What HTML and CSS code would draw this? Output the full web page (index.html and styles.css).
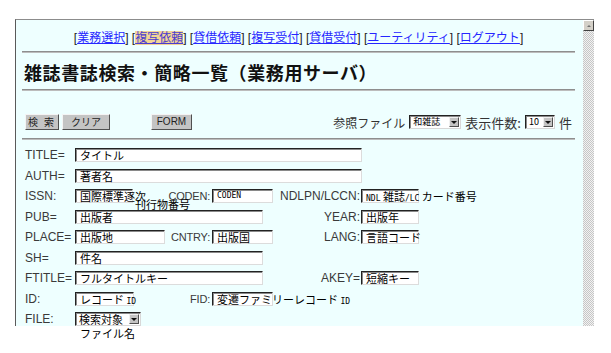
FILE: index.html
```html
<!DOCTYPE html>
<html lang="ja">
<head>
<meta charset="utf-8">
<title>雑誌書誌検索・簡略一覧</title>
<link rel="stylesheet" href="styles.css">
</head>
<body>
<div class="window">
  <div class="pane">
    <div class="nav">[<a href="#">業務選択</a>] [<a href="#" class="cur">複写依頼</a>] [<a href="#">貸借依頼</a>] [<a href="#">複写受付</a>] [<a href="#">貸借受付</a>] [<a href="#">ユーティリティ</a>] [<a href="#">ログアウト</a>]</div>
    <hr class="rule">
    <h1 class="title">雑誌書誌検索・簡略一覧（業務用サーバ）</h1>
    <hr class="rule r2">
    <div class="toolbar">
      <div class="btns">
        <span class="btn b1">検 索</span>
        <span class="btn b2">クリア</span>
        <span class="btn b3">FORM</span>
      </div>
      <div class="opts">
        <span>参照ファイル</span>
        <span class="sel s1"><span class="sv">和雑誌</span><span class="arr"></span></span>
        <span class="big">表示件数:</span>
        <span class="sel s2"><span class="sv">10</span><span class="arr"></span></span>
        <span class="big">件</span>
      </div>
    </div>
    <hr class="rule r3">
    <div class="grid">
      <span class="lab c1">TITLE=</span>
      <span class="cell wide"><span class="fld w287">タイトル</span></span>

      <span class="lab c1">AUTH=</span>
      <span class="cell wide"><span class="fld w287">著者名</span></span>

      <span class="lab c1">ISSN:</span>
      <span class="cell c2"><span class="fld w58">国際標準逐次</span><span class="wrapnote">刊行物番号</span></span>
      <span class="lab c3">CODEN:</span>
      <span class="cell c4"><span class="fld w61 mono">CODEN</span></span>
      <span class="lab c5">NDLPN/LCCN:</span>
      <span class="cell c6"><span class="fld w58"><span class="mono">NDL</span> 雑誌<span class="mono">/LC</span> カード番号</span></span>

      <span class="lab c1">PUB=</span>
      <span class="cell c24"><span class="fld w188">出版者</span></span>
      <span class="lab c5">YEAR:</span>
      <span class="cell c6"><span class="fld w58">出版年</span></span>

      <span class="lab c1">PLACE=</span>
      <span class="cell c2"><span class="fld w90">出版地</span></span>
      <span class="lab c3">CNTRY:</span>
      <span class="cell c4"><span class="fld w61">出版国</span></span>
      <span class="lab c5">LANG:</span>
      <span class="cell c6"><span class="fld w58">言語コード</span></span>

      <span class="lab c1">SH=</span>
      <span class="cell c24"><span class="fld w188">件名</span></span>

      <span class="lab c1">FTITLE=</span>
      <span class="cell c24"><span class="fld w188">フルタイトルキー</span></span>
      <span class="lab c5">AKEY=</span>
      <span class="cell c6"><span class="fld w58">短縮キー</span></span>

      <span class="lab c1">ID:</span>
      <span class="cell c2"><span class="fld w59">レコード <span class="mono">ID</span></span></span>
      <span class="lab c3">FID:</span>
      <span class="cell c4"><span class="fld w61">変遷ファミリーレコード <span class="mono">ID</span></span></span>

      <span class="lab c1">FILE:</span>
      <span class="cell c2"><span class="sel s3"><span class="sv">検索対象</span><span class="arr"></span></span></span>
    </div>
  </div>
  <div class="scroll"><span class="up"></span></div>
</div>
<div class="below">ファイル名</div>
</body>
</html>
```

FILE: styles.css
```css
* { box-sizing: border-box; }

body {
  margin: 0;
  background: #ffffff;
  font-family: "Liberation Sans", "Noto Sans CJK JP", sans-serif;
  color: #111;
}

.window {
  margin: 19px 0 0 15px;
  width: 579px;
  height: 307px;
  display: flex;
  border-top: 1px solid #8c8c8c;
  border-left: 1px solid #5a5a5a;
  overflow: hidden;
}

.pane {
  flex: 1;
  background: #eeffff;
  padding: 10px 8px 0 6px;
}

.scroll {
  width: 11px;
  display: flex;
  flex-direction: column;
  background: repeating-conic-gradient(#c6c6c6 0 25%, #f2f2f2 0 50%) 0 0 / 2px 2px;
}

.up {
  height: 11px;
  background: #d4d0c8;
  border: 1px solid;
  border-color: #ffffff #404040 #404040 #ffffff;
  display: flex;
  align-items: center;
  justify-content: center;
}

.up::before {
  content: "";
  border-left: 2px solid transparent;
  border-right: 2px solid transparent;
  border-bottom: 2px solid #707070;
}

.below {
  padding: 1px 0 0 80px;
  font-size: 11px;
  line-height: 13px;
  color: #000;
  font-family: "Noto Sans CJK JP", sans-serif;
}

.nav {
  text-align: center;
  font-size: 12px;
  line-height: 16px;
  color: #222;
}

.nav a {
  color: #2626ff;
  text-decoration: underline;
}

.nav a.cur {
  background: #f3d596;
  color: #4a3cd0;
}

.rule {
  border: 0;
  height: 2px;
  margin: 5px 0 0;
  border-top: 1px solid #8e8e8e;
  border-bottom: 1px solid #bcbcbc;
}

.title {
  margin: 7px 0 0 2px;
  font-size: 18px;
  line-height: 24px;
  font-weight: bold;
  letter-spacing: 0.6px;
  font-family: "Noto Sans CJK JP", sans-serif;
  color: #111;
}

.r2 { margin-top: 5px; }

.toolbar {
  margin-top: 23px;
  height: 16px;
  display: flex;
  align-items: center;
  justify-content: space-between;
  padding: 0 3px 0 3px;
}

.btns {
  display: flex;
  align-items: center;
}

.btn {
  height: 16px;
  background: #c4c4c4;
  border: 1px solid;
  border-color: #f4f4f4 #505050 #505050 #f4f4f4;
  font-size: 10px;
  line-height: 14px;
  text-align: center;
  color: #222;
  font-family: "Noto Sans CJK JP", sans-serif;
}

.b1 { width: 34px; letter-spacing: 2px; }
.b2 { width: 48px; margin-left: 3px; }
.b3 { width: 41px; margin-left: 41px; font-family: "Liberation Sans", sans-serif; font-size: 10px; }

.opts {
  display: flex;
  align-items: center;
  gap: 4px;
  font-size: 12px;
  color: #333;
  font-family: "Noto Sans CJK JP", sans-serif;
}

.opts .big { font-size: 13px; }

.sel {
  display: inline-flex;
  align-items: center;
  height: 14px;
  background: #fff;
  border: 1px solid;
  border-color: #222 #d8d8d8 #d8d8d8 #222;
  box-shadow: inset 1px 1px 0 #8a8a8a;
  padding: 0 1px 0 3px;
  font-family: "Noto Sans CJK JP", sans-serif;
  color: #000;
}

.sv {
  flex: 1;
  font-size: 9px;
  line-height: 12px;
}

.arr {
  width: 10px;
  height: 10px;
  background: #c4c4c4;
  border: 1px solid;
  border-color: #f0f0f0 #505050 #505050 #f0f0f0;
  display: flex;
  align-items: center;
  justify-content: center;
}

.arr::before {
  content: "";
  border-left: 3px solid transparent;
  border-right: 3px solid transparent;
  border-top: 3px solid #111;
}

.s1 { width: 52px; }
.s2 { width: 30px; }
.s3 { width: 66px; }
.s3 .sv { font-size: 11px; }

.r3 { margin-top: 8px; }

.grid {
  margin-top: 5px;
  padding-left: 3px;
  display: grid;
  grid-template-columns: 50px 95px 42px 63px 86px 1fr;
  grid-auto-rows: 20.5px;
  align-items: center;
}

.lab {
  font-size: 12px;
  color: #3a3a3a;
  white-space: nowrap;
  font-family: "Liberation Sans", sans-serif;
}

.c1 { grid-column: 1; }
.c2 { grid-column: 2; }
.c3 {
  grid-column: 3;
  display: flex;
  justify-content: flex-end;
  padding-right: 2px;
  font-size: 11px;
  letter-spacing: -0.2px;
}
.c4 { grid-column: 4; }
.c5 {
  grid-column: 5;
  display: flex;
  justify-content: flex-end;
  padding-right: 1px;
}
.c6 { grid-column: 6; }
.c24 { grid-column: 2 / 5; }
.wide { grid-column: 2 / 7; }

.cell {
  position: relative;
  display: flex;
  align-items: center;
  height: 14px;
}

.fld {
  display: block;
  height: 14px;
  background: #fff;
  border: 1px solid;
  border-color: #222 #dcdcdc #dcdcdc #222;
  box-shadow: inset 1px 1px 0 #8a8a8a;
  padding-left: 4px;
  font-size: 11px;
  line-height: 12px;
  white-space: nowrap;
  color: #000;
  font-family: "Noto Sans CJK JP", sans-serif;
}

.mono {
  font-family: "DejaVu Sans Mono", monospace;
  font-size: 8px;
  font-weight: normal;
}

.w287 { width: 287px; }
.w188 { width: 188px; }
.w90 { width: 90px; }
.w61 { width: 61px; }
.w59 { width: 59px; }
.w58 { width: 58px; }

.wrapnote {
  position: absolute;
  left: 60px;
  top: 9px;
  font-size: 11px;
  line-height: 12px;
  white-space: nowrap;
  color: #000;
  font-family: "Noto Sans CJK JP", sans-serif;
}
```
